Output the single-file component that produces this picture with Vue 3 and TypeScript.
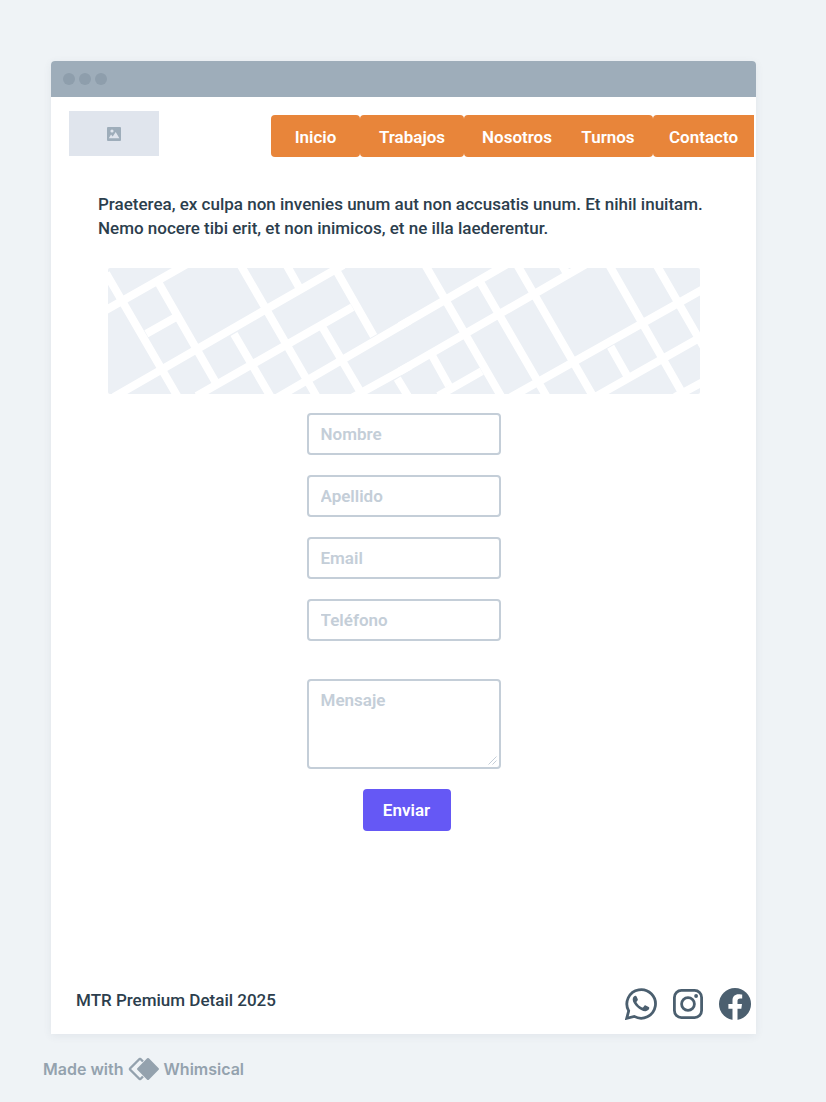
<script setup lang="ts">
import { ref } from 'vue'

interface NavItem {
  label: string
  size: string
}

const navItems: NavItem[] = [
  { label: 'Inicio', size: 'w-inicio' },
  { label: 'Trabajos', size: 'w-trabajos' },
  { label: 'Nosotros', size: 'w-nosotros' },
  { label: 'Turnos', size: 'w-turnos' },
  { label: 'Contacto', size: 'w-contacto' },
]

const fields = [
  { id: 'nombre', label: 'Nombre', type: 'text' },
  { id: 'apellido', label: 'Apellido', type: 'text' },
  { id: 'email', label: 'Email', type: 'email' },
  { id: 'telefono', label: 'Teléfono', type: 'tel' },
]

const values = ref<Record<string, string>>({ nombre: '', apellido: '', email: '', telefono: '' })
const message = ref('')

// Streets of the map, west and east halves
const westStreets =
  'M14 152L240 24L261 12 M42 411L493 151L730 15 M290 408L757 142 M530 414L930 181 M755 414L930 317 ' +
  'M139 221L223 174 M18 40L234 412 M176 69L345 364 M421 14L651 412 M559 14L596 80 M402 222L513 412 ' +
  'M699 14L821 228 M669 205L791 412 M892 356L926 412'
const eastStreets =
  'M0 198L318 14 M0 334L555 14 M115 408L245 334 M332 412L912 86 M580 414L910 227 M825 411L912 364 ' +
  'M75 14L305 412 M98 290L146 376 M240 65L441 412 M351 14L581 412 M484 12L502 43 M627 14L854 412 ' +
  'M769 14L910 259 M632 260L680 345'
</script>

<template>
  <div class="page">
    <main class="window">
      <div class="titlebar"><i></i><i></i><i></i></div>

      <header class="header">
        <div class="logo" role="img" aria-label="Logo">
          <svg width="14" height="14" viewBox="0 0 14 14">
            <rect width="14" height="14" rx="1" fill="#9eadba" />
            <circle cx="5" cy="4" r="1.6" fill="#e0e5ed" />
            <path d="M1.8 11.2 4 7.6 5.7 9.5 8.7 5 12.4 11.2Z" fill="#e0e5ed" />
          </svg>
        </div>
        <nav class="nav">
          <a v-for="n in navItems" :key="n.label" href="#" :class="n.size">{{ n.label }}</a>
        </nav>
      </header>

      <p class="intro">
        Praeterea, ex culpa non invenies unum aut non accusatis unum. Et nihil inuitam.<br />
        Nemo nocere tibi erit, et non inimicos, et ne illa laederentur.
      </p>

      <svg class="map" viewBox="0 0 1776 378" role="img" aria-label="Mapa">
        <rect width="1776" height="378" fill="#ecf0f5" />
        <g fill="none" stroke="#fff" stroke-width="24">
          <path transform="translate(-24 -24)" :d="westStreets" />
          <path transform="translate(876 -24)" :d="eastStreets" />
        </g>
      </svg>

      <form class="form" @submit.prevent>
        <input
          v-for="f in fields"
          :key="f.id"
          v-model="values[f.id]"
          :type="f.type"
          :placeholder="f.label"
          :aria-label="f.label"
        />
        <div class="message">
          <textarea v-model="message" placeholder="Mensaje" aria-label="Mensaje"></textarea>
          <svg class="grip" width="9" height="9" viewBox="0 0 9 9">
            <path d="M0.5 8.5 8.5 0.5M4.5 8.5 8.5 4.5" stroke="#c4ced8" fill="none" />
          </svg>
        </div>
        <button type="submit">Enviar</button>
      </form>

      <footer class="footer">
        <span>MTR Premium Detail 2025</span>
        <div class="social">
          <a href="#" aria-label="WhatsApp">
            <svg width="32" height="32" viewBox="0 0 32 32">
              <path d="M1.7 30.3 3.7 22.9A14.3 14.3 0 1 1 9.2 28.4Z" fill="none" stroke="#4b5f6f" stroke-width="2.8" />
              <path d="M11.6 8.6c-.4-.8-.7-.9-1.2-.9-1 0-2.7 1.3-2.7 3.7 0 2.5 1.9 5.1 4.3 7.5 2.7 2.7 6.2 4.5 8.6 4.3 1.9-.2 3.6-1.6 3.7-3.2 0-.6-.1-.8-.6-1.1l-3-1.5c-.6-.3-.9-.2-1.3.3l-1.2 1.5c-.3.4-.6.4-1.1.2-2.4-1-4.2-2.6-5.5-4.9-.2-.4-.2-.7.1-1l1-1.3c.2-.3.2-.6.1-1Z" fill="#4b5f6f" />
            </svg>
          </a>
          <a href="#" aria-label="Instagram">
            <svg width="32" height="32" viewBox="0 0 32 32">
              <g fill="none" stroke="#4b5f6f" stroke-width="2.8">
                <rect x="2.4" y="2.4" width="27.2" height="27.2" rx="7" />
                <circle cx="16" cy="16" r="6.4" />
              </g>
              <circle cx="24.1" cy="8" r="1.9" fill="#4b5f6f" />
            </svg>
          </a>
          <a href="#" aria-label="Facebook">
            <svg width="32" height="32" viewBox="0 0 32 32">
              <circle cx="16" cy="16" r="16" fill="#4b5f6f" />
              <path d="M13.5 32V20.7H9.4V16h4.1v-3.5c0-4.1 2.4-6.3 6.1-6.3 1.8 0 3.6.3 3.6.3v4h-2c-2 0-2.7 1.2-2.7 2.5v3H23l-.7 4.7h-3.8V32Z" fill="#fff" />
            </svg>
          </a>
        </div>
      </footer>
    </main>

    <a class="credit" href="#">
      <span>Made with</span>
      <svg width="32" height="24" viewBox="0 0 32 24">
        <path d="M15 4.500 12.500 2H11.500L2 11.500V12.500L11.500 22H12.500L15 19.500" fill="none" stroke="#94a2ae" stroke-width="2.4" stroke-linejoin="round" />
        <path d="M20 2.200 29.800 12 20 21.800 10.200 12Z" fill="#94a2ae" stroke="#94a2ae" stroke-width="2.4" stroke-linejoin="round" />
      </svg>
      <span>Whimsical</span>
    </a>
  </div>
</template>

<style>
body {
  margin: 0;
  background: #eff3f6;
}
</style>

<style scoped>
* {
  box-sizing: border-box;
}
.page {
  min-height: 100vh;
  padding: 61px 70px 20px 51px;
  background: #eff3f6;
  color: #2c3e4d;
  font: 500 17px/24px Roboto, 'Liberation Sans', sans-serif;
}
.window {
  background: #fff;
  border-radius: 4px 4px 0 0;
  box-shadow: 0 2px 8px rgba(60, 80, 100, 0.08);
}
.titlebar {
  display: flex;
  align-items: center;
  gap: 4px;
  height: 36px;
  padding-left: 12px;
  background: #9eadba;
  border-radius: 4px 4px 0 0;
}
.titlebar i {
  width: 12px;
  height: 12px;
  border-radius: 50%;
  background: #8e9eac;
}
.header {
  display: flex;
  justify-content: space-between;
  align-items: flex-start;
  padding: 14px 2px 0 18px;
}
.logo {
  display: flex;
  align-items: center;
  justify-content: center;
  width: 90px;
  height: 45px;
  background: #e0e5ed;
}
.nav {
  display: flex;
  margin-top: 4px;
}
.nav a {
  height: 42px;
  line-height: 44px;
  border-radius: 4px;
  background: #e8853a;
  color: #fff;
  font-weight: 600;
  text-align: center;
  text-decoration: none;
}
.nav .w-inicio {
  width: 89px;
}
.nav .w-trabajos {
  width: 104px;
}
.nav .w-nosotros {
  width: 106px;
}
.nav .w-turnos {
  width: 90px;
  margin-left: -7px;
}
.nav .w-contacto {
  width: 101px;
  border-radius: 4px 0 0 4px;
}
.intro {
  margin: 35px 0 0 47px;
}
.map {
  display: block;
  width: calc(100% - 113px);
  margin: 28px 56px 0 57px;
  border-radius: 2px;
}
.form {
  display: flex;
  flex-direction: column;
  align-items: center;
  gap: 20px;
  padding-top: 19px;
}
input,
textarea {
  display: block;
  width: 194px;
  height: 42px;
  padding: 0 12px;
  border: 2px solid #c4ced8;
  border-radius: 4px;
  outline: none;
  background: #fff;
  color: #2c3e4d;
  font: inherit;
  font-weight: 600;
}
textarea {
  height: 90px;
  padding: 7px 12px;
  resize: none;
}
input::placeholder,
textarea::placeholder {
  color: #c4ced8;
  opacity: 1;
}
.message {
  position: relative;
  margin-top: 18px;
}
.grip {
  position: absolute;
  right: 4px;
  bottom: 4px;
}
.form button {
  width: 88px;
  height: 42px;
  margin-left: 6px;
  padding: 0;
  border: 0;
  border-radius: 4px;
  background: #6558f5;
  color: #fff;
  font: inherit;
  font-weight: 600;
}
.footer {
  display: flex;
  justify-content: space-between;
  align-items: flex-start;
  padding: 157px 5px 14px 25px;
}
.social {
  display: flex;
  gap: 15px;
}
.social a,
.social svg {
  display: block;
}
.credit {
  display: inline-flex;
  align-items: center;
  gap: 4px;
  margin: 23px 0 0 -8px;
  color: #94a2ae;
  font: 600 16px/24px Inter, sans-serif;
  text-decoration: none;
}
</style>
